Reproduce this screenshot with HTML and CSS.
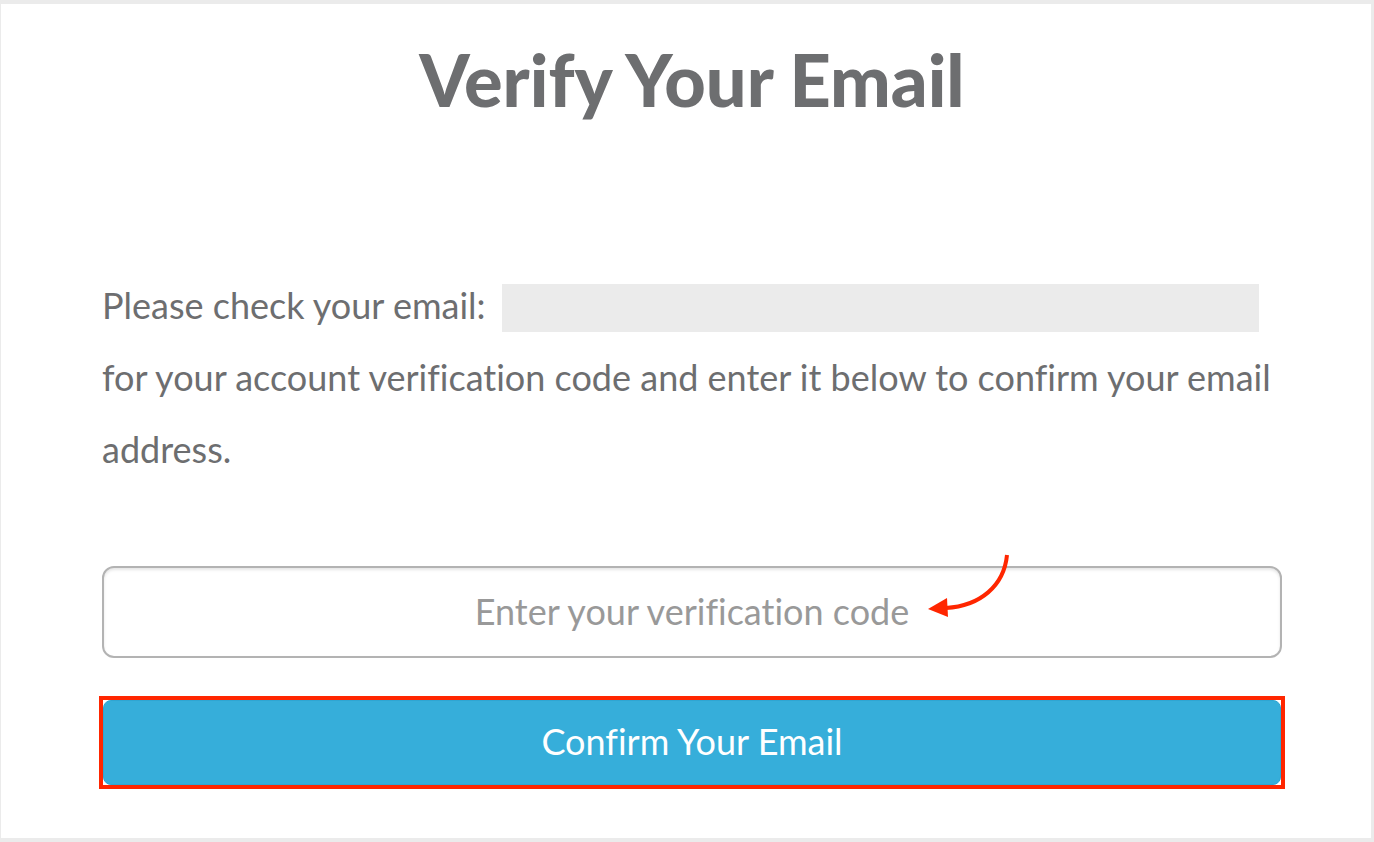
FILE: index.html
```html
<!DOCTYPE html>
<html lang="en">
<head>
<meta charset="utf-8">
<meta name="viewport" content="width=device-width, initial-scale=1">
<title>Verify Your Email</title>
<link rel="stylesheet" href="styles.css">
</head>
<body>
<main class="card">
  <h1 class="title">Verify Your Email</h1>
  <div class="message">
    <p class="recipient">Please check your email: <span class="redacted"></span></p>
    <p>for your account verification code and enter it below to confirm your email address.</p>
  </div>
  <form class="form">
    <div class="field">
      <input class="code" type="text" placeholder="Enter your verification code" aria-label="Enter your verification code">
      <svg class="arrow" width="84" height="66" viewBox="0 0 84 66" aria-hidden="true">
        <path d="M79 3C76 34 52 54 18 56" fill="none" stroke="#ff2600" stroke-width="4"/>
        <path d="M0 57L19 46L20 65Z" fill="#ff2600"/>
      </svg>
    </div>
    <div class="highlight"><button class="confirm" type="button">Confirm Your Email</button></div>
  </form>
</main>
</body>
</html>
```
FILE: styles.css
```css
* { box-sizing: border-box; }
body {
  margin: 0;
  min-height: 100vh;
  display: flex;
  padding: 4px 3px 4px 1px;
  background: #ebebeb;
  color: #6d6e70;
  font-family: Lato, sans-serif;
  font-variant-ligatures: none;
}
.card { flex: 1; background: #fff; padding: 31px 86px 48px 98px; }
.title {
  margin: 0 0 146px;
  font-size: 72px;
  line-height: 88px;
  font-weight: 900;
  text-align: center;
}
.message { padding: 0 3px; font-size: 36px; line-height: 72px; }
.message p { margin: 0; }
.recipient { display: flex; align-items: center; gap: 16px; }
.redacted { flex: 1; height: 48px; margin: 6px 23px 0 0; background: #ebebeb; }
.form { margin-top: 81px; }
.field { position: relative; padding: 0 3px; margin-bottom: 38px; }
.code {
  display: block;
  width: 100%;
  height: 92px;
  padding: 0 20px 2px;
  border: 2px solid #b3b3b3;
  border-radius: 12px;
  box-shadow: inset 0 2px 3px rgba(0, 0, 0, .1);
  background: #fff;
  color: #6d6e70;
  font: inherit;
  font-variant-ligatures: none;
  font-size: 36px;
  text-align: center;
}
.code::placeholder { color: #999; opacity: 1; }
.arrow { position: absolute; left: calc(50% + 236px); top: -14px; }
.highlight { border: 4px solid #ff2600; }
.confirm {
  display: block;
  width: 100%;
  height: 85px;
  padding: 0 0 4px;
  border: 1px solid #2fa5d2;
  border-radius: 8px;
  background: #36aeda;
  color: #fff;
  font: inherit;
  font-variant-ligatures: none;
  font-size: 36px;
}
```
